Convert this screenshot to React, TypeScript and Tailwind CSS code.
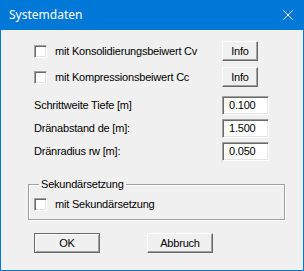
import React from "react";

const font = { fontFamily: '"Liberation Sans", Arial, sans-serif' };

function CheckBox() {
  return (
    <div className="w-[13px] h-[13px] shrink-0 bg-white border border-t-[#a0a0a0] border-l-[#a0a0a0] border-b-white border-r-white shadow-[inset_1px_1px_0_#696969,inset_-1px_-1px_0_#e3e3e3]" />
  );
}

function Btn({ children, w, def }: { children: React.ReactNode; w: string; def?: boolean }) {
  return (
    <div
      className={`${w} h-[20px] flex items-center justify-center bg-[#f0f0f0] text-[11px] text-black ${
        def
          ? "border border-[#696969] shadow-[inset_1px_1px_0_#ffffff,inset_-1px_-1px_0_#a0a0a0]"
          : "border border-t-white border-l-white border-b-[#696969] border-r-[#696969] shadow-[inset_-1px_-1px_0_#a0a0a0]"
      }`}
    >
      {children}
    </div>
  );
}

function Input({ value }: { value: string }) {
  return (
    <div className="w-[47px] h-[19px] bg-white border border-t-[#a0a0a0] border-l-[#a0a0a0] border-b-white border-r-white shadow-[inset_1px_1px_0_#696969,inset_-1px_-1px_0_#e3e3e3] flex items-center pl-[6px] text-[11px] tracking-[-0.2px] text-black">
      {value}
    </div>
  );
}

export default function App() {
  return (
    <div className="w-[304px] h-[271px] flex flex-col bg-[#0078d7]" style={font}>
      <div className="h-[30px] flex items-center justify-between pl-[9px] pr-[11px] shrink-0">
        <span className="text-white text-[12px] leading-none" style={{ fontFamily: '"Noto Sans", "Open Sans", sans-serif' }}>
          Systemdaten
        </span>
        <svg width="10" height="10" viewBox="0 0 10 10" className="block">
          <path d="M0.5 0.5 L9.5 9.5 M9.5 0.5 L0.5 9.5" stroke="white" strokeWidth="1" />
        </svg>
      </div>
      <div className="flex-1 mx-[1px] mb-[1px] bg-[#f0f0f0] flex flex-col pl-[27px] pt-[11px] text-[11px] tracking-[-0.2px] text-black">
        <div className="flex items-center h-[20px] pl-[6px]">
          <div className="w-[188px] flex items-center gap-[8px]">
            <CheckBox />
            <span>mit Konsolidierungsbeiwert Cv</span>
          </div>
          <Btn w="w-[36px]">Info</Btn>
        </div>
        <div className="flex items-center h-[20px] pl-[6px] mt-[6px]">
          <div className="w-[188px] flex items-center gap-[8px]">
            <CheckBox />
            <span>mit Kompressionsbeiwert Cc</span>
          </div>
          <Btn w="w-[36px]">Info</Btn>
        </div>
        <div className="flex flex-col gap-[4px] mt-[9px] pl-[6px]">
          <div className="flex items-center">
            <span className="w-[188px]">Schrittweite Tiefe [m]</span>
            <Input value="0.100" />
          </div>
          <div className="flex items-center">
            <span className="w-[188px]">Dränabstand de [m]:</span>
            <Input value="1.500" />
          </div>
          <div className="flex items-center">
            <span className="w-[188px]">Dränradius rw [m]:</span>
            <Input value="0.050" />
          </div>
        </div>
        <div className="relative mt-[23px] w-[257px] h-[36px] border border-[#a0a0a0] shadow-[inset_1px_1px_0_#ffffff,1px_1px_0_#ffffff] flex items-center pl-[5px] pt-[4px]">
          <span className="absolute left-[10px] top-[-8px] px-[2px] bg-[#f0f0f0] leading-[14px]">Sekundärsetzung</span>
          <div className="flex items-center gap-[8px]">
            <CheckBox />
            <span>mit Sekundärsetzung</span>
          </div>
        </div>
        <div className="flex items-center gap-[47px] mt-[13px] pl-[6px]">
          <Btn w="w-[66px]" def>OK</Btn>
          <Btn w="w-[66px]">Abbruch</Btn>
        </div>
      </div>
    </div>
  );
}
